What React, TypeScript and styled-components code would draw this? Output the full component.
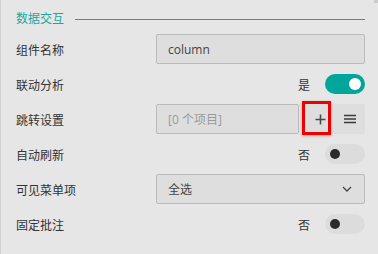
import React from "react";
import styled, { createGlobalStyle } from "styled-components";

const Global = createGlobalStyle`
  html, body { margin: 0; padding: 0; background: #e6e6e6; }
  body { font-family: "Noto Sans CJK SC", "Noto Sans", sans-serif; }
`;

const Panel = styled.div`
  position: relative;
  width: 378px;
  height: 254px;
  box-sizing: border-box;
  background: #e6e6e6;
  border-left: 1px solid #cfcfcf;
  padding: 8px 13px 0 15px;
  display: flex;
  flex-direction: column;
  gap: 5px;
  overflow: hidden;
`;

const ScrollThumb = styled.div`
  position: absolute;
  top: 0;
  right: 0;
  width: 4px;
  height: 3px;
  background: #cccccc;
`;

const SectionHeader = styled.div`
  display: flex;
  align-items: center;
  height: 20px;
  margin-bottom: 1px;
`;

const SectionTitle = styled.span`
  color: #1ea69c;
  font-size: 12px;
  line-height: 20px;
`;

const SectionLine = styled.div`
  flex: 1;
  height: 1px;
  margin-left: 11px;
  margin-top: 2px;
  background: #1ea69c;
`;

const Row = styled.div`
  display: flex;
  align-items: center;
  height: 30px;
`;

const Label = styled.div`
  width: 140px;
  flex: none;
  font-size: 12px;
  color: #333333;
`;

const Control = styled.div<{ $end?: boolean }>`
  flex: 1;
  display: flex;
  align-items: center;
  justify-content: ${(p) => (p.$end ? "flex-end" : "flex-start")};
  height: 100%;
`;

const Field = styled.div<{ $muted?: boolean }>`
  flex: 1;
  height: 30px;
  box-sizing: border-box;
  border: 1px solid #bababa;
  border-radius: 2px;
  background: #dedede;
  display: flex;
  align-items: center;
  justify-content: space-between;
  padding: 0 12px 0 11px;
  font-family: "Open Sans", "Noto Sans CJK SC", sans-serif;
  font-size: 12px;
  color: ${(p) => (p.$muted ? "#9a9a9a" : "#444444")};
`;

const StateText = styled.span`
  font-size: 12px;
  color: #333333;
  margin-right: 15px;
`;

const Toggle = styled.div<{ $on?: boolean }>`
  position: relative;
  width: 40px;
  height: 20px;
  border-radius: 10px;
  background: ${(p) => (p.$on ? "#00a59b" : "#dcdcdc")};
`;

const Knob = styled.div<{ $on?: boolean }>`
  position: absolute;
  top: ${(p) => (p.$on ? "4px" : "5px")};
  left: ${(p) => (p.$on ? "24px" : "5px")};
  width: ${(p) => (p.$on ? "12px" : "10px")};
  height: ${(p) => (p.$on ? "12px" : "10px")};
  border-radius: 50%;
  background: ${(p) => (p.$on ? "#ffffff" : "#2b2b2b")};
`;

const ButtonGroup = styled.div`
  display: flex;
  margin-left: 6px;
  background: #dedede;
  border-radius: 2px;
`;

const IconButton = styled.div`
  position: relative;
  width: 30px;
  height: 30px;
  display: flex;
  align-items: center;
  justify-content: center;
  color: #4a4a4a;
`;

const Highlight = styled.div`
  position: absolute;
  left: -3px;
  top: -3px;
  width: 29px;
  height: 34px;
  box-sizing: border-box;
  border: 3px solid #ee0000;
  box-shadow: 0 1px 3px rgba(0, 0, 0, 0.25);
  pointer-events: none;
`;

const Plus = () => (
  <svg width="11" height="11" viewBox="0 0 11 11">
    <path d="M5.5 0.5v10M0.5 5.5h10" stroke="#4a4a4a" strokeWidth="1.6" />
  </svg>
);

const Menu = () => (
  <svg width="12" height="10" viewBox="0 0 12 10">
    <path d="M0 1.5h12M0 5h12M0 8.5h12" stroke="#3a3a3a" strokeWidth="1.3" />
  </svg>
);

const Chevron = () => (
  <svg width="10" height="6" viewBox="0 0 10 6">
    <path d="M1 1l4 4 4-4" stroke="#444" strokeWidth="1.3" fill="none" />
  </svg>
);

export default function App() {
  return (
    <>
      <Global />
      <Panel>
        <ScrollThumb />
        <SectionHeader>
          <SectionTitle>数据交互</SectionTitle>
          <SectionLine />
        </SectionHeader>
        <Row>
          <Label>组件名称</Label>
          <Control>
            <Field>column</Field>
          </Control>
        </Row>
        <Row>
          <Label>联动分析</Label>
          <Control $end>
            <StateText>是</StateText>
            <Toggle $on>
              <Knob $on />
            </Toggle>
          </Control>
        </Row>
        <Row>
          <Label>跳转设置</Label>
          <Control>
            <Field $muted>[0 个项目]</Field>
            <ButtonGroup>
              <IconButton>
                <Plus />
                <Highlight />
              </IconButton>
              <IconButton>
                <Menu />
              </IconButton>
            </ButtonGroup>
          </Control>
        </Row>
        <Row>
          <Label>自动刷新</Label>
          <Control $end>
            <StateText>否</StateText>
            <Toggle>
              <Knob />
            </Toggle>
          </Control>
        </Row>
        <Row>
          <Label>可见菜单项</Label>
          <Control>
            <Field>
              <span>全选</span>
              <Chevron />
            </Field>
          </Control>
        </Row>
        <Row>
          <Label>固定批注</Label>
          <Control $end>
            <StateText>否</StateText>
            <Toggle>
              <Knob />
            </Toggle>
          </Control>
        </Row>
      </Panel>
    </>
  );
}
